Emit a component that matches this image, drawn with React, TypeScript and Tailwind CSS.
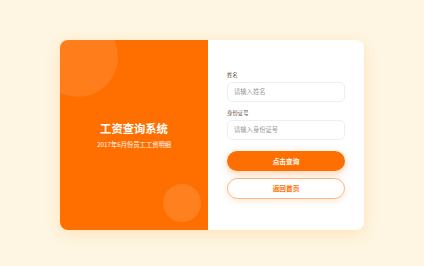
import React from "react";

export default function App() {
  return (
    <div
      className="w-[424px] h-[266px] bg-[#fef6e3] pt-[40px]"
      style={{ fontFamily: '"Noto Sans CJK SC", "Noto Sans", sans-serif' }}
    >
      <div className="mx-auto w-[304px] h-[190px] rounded-[8px] overflow-hidden flex shadow-[0_4px_16px_rgba(255,170,60,0.25)] bg-white">
        <div className="relative w-[148px] h-full bg-[#ff6f00] overflow-hidden flex flex-col items-center pt-[81px]">
          <div className="absolute w-[80px] h-[80px] rounded-full bg-[rgba(255,255,255,0.1)] -top-[23px] -left-[22px]" />
          <div className="absolute w-[38px] h-[38px] rounded-full bg-[rgba(255,255,255,0.12)] bottom-[8px] right-[7px]" />
          <div className="relative text-white font-bold text-[11.3px] leading-[14px]">工资查询系统</div>
          <div className="relative text-white text-[6.3px] leading-[8px] mt-[6px] opacity-95">2017年6月份员工工资明细</div>
        </div>
        <div className="flex-1 px-[19px] flex flex-col pt-[31px]">
          <div className="text-[5.4px] leading-[8px] text-[#6b4a3a]">姓名</div>
          <div className="mt-[3px] h-[20px] rounded-[5px] border border-[#eeeeee] flex items-center pl-[6px] text-[6.3px] text-[#999999]">
            请输入姓名
          </div>
          <div className="mt-[7px] text-[5.4px] leading-[8px] text-[#6b4a3a]">身份证号</div>
          <div className="mt-[3px] h-[20px] rounded-[5px] border border-[#eeeeee] flex items-center pl-[6px] text-[6.3px] text-[#999999]">
            请输入身份证号
          </div>
          <div className="mt-[11px] h-[20px] rounded-full bg-[#ff6f00] flex items-center justify-center text-white font-bold text-[6.7px] shadow-[0_3px_8px_rgba(255,111,0,0.3)]">
            点击查询
          </div>
          <div className="mt-[7px] h-[21px] rounded-full bg-white border border-[#ffb37a] flex items-center justify-center text-[#ff6f00] font-bold text-[6.7px] shadow-[0_2px_6px_rgba(255,150,60,0.2)]">
            返回首页
          </div>
        </div>
      </div>
    </div>
  );
}
